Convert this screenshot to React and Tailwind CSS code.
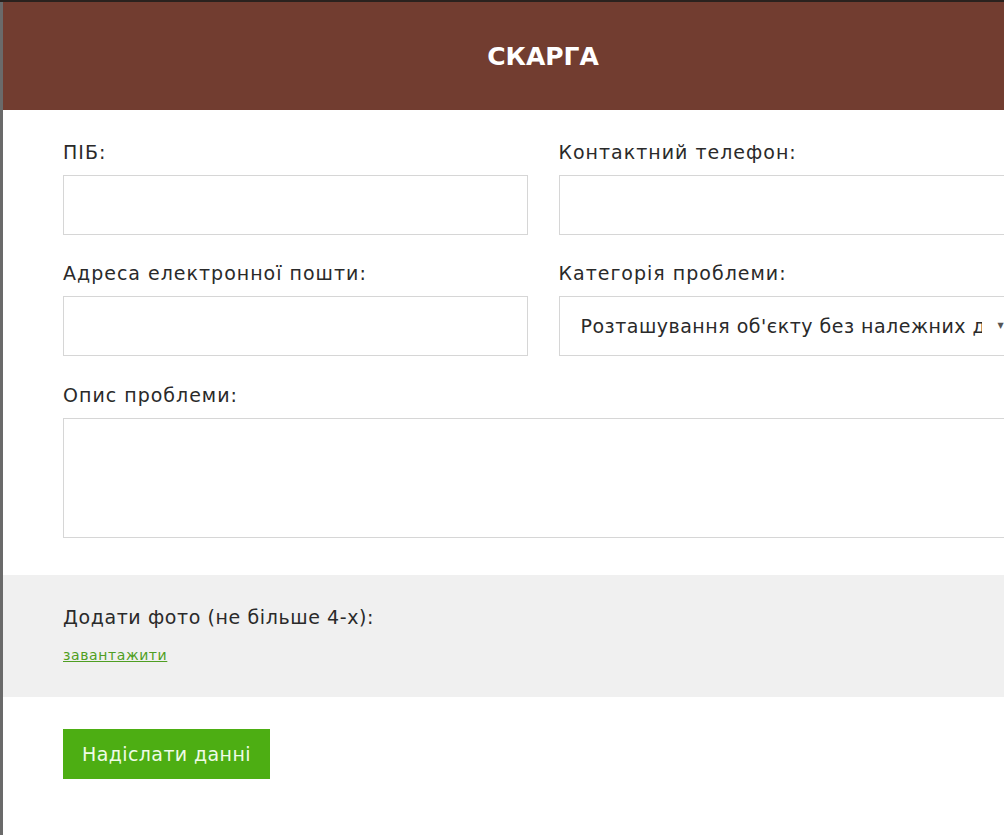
import React from 'react';

const font = { fontFamily: '"DejaVu Sans", "Open Sans", sans-serif' };

function Field({ label, children, className = '' }) {
  return (
    <div className={`flex flex-col ${className}`}>
      <label className="h-[30px] text-[19px] leading-[30px] tracking-[1px] text-[#2a2a2a]">{label}</label>
      <div className="mt-[8px]">{children}</div>
    </div>
  );
}

export default function App() {
  return (
    <div className="h-[835px] w-[1004px] overflow-hidden bg-[#6a6a6a] border-t-2 border-[#2a221e] pl-[3px]" style={font}>
      <div className="w-[1080px] bg-white h-full">
        {/* Header */}
        <div className="h-[108px] bg-[#723d30] flex items-center justify-center pt-[2px]">
          <h1 className="text-white text-[25px] font-semibold">СКАРГА</h1>
        </div>

        {/* Form */}
        <div className="px-[60px] pt-[27px]">
          <div className="grid grid-cols-2 gap-x-[31px] gap-y-[23px]">
            <Field label="ПІБ:">
              <div className="h-[60px] border border-[#d6d6d6]" />
            </Field>
            <Field label="Контактний телефон:">
              <div className="h-[60px] border border-[#d6d6d6]" />
            </Field>
            <Field label="Адреса електронної пошти:">
              <div className="h-[60px] border border-[#d6d6d6]" />
            </Field>
            <Field label="Категорія проблеми:">
              <div className="h-[60px] border border-[#d6d6d6] flex items-center pl-[21px]">
                <span className="w-[401px] shrink-0 overflow-hidden whitespace-nowrap text-[19px] tracking-[0.5px] text-[#2a2a2a]">
                  Розташування об'єкту без належних дозволів
                </span>
                <span className="ml-[16px] text-[8px] text-[#555]">▼</span>
              </div>
            </Field>
          </div>
          <Field label="Опис проблеми:" className="mt-[24px]">
            <div className="h-[120px] border border-[#d6d6d6]" />
          </Field>
        </div>

        {/* Photos */}
        <div className="mt-[37px] h-[122px] bg-[#f0f0f0] px-[60px] pt-[28px]">
          <p className="text-[19px] tracking-[0.6px] text-[#2a2a2a] leading-[28px]">Додати фото (не більше 4-х):</p>
          <a href="#" className="block mt-[15px] text-[14px] tracking-[0.6px] text-[#4f9e22] underline leading-[18px]">
            завантажити
          </a>
        </div>

        {/* Submit */}
        <div className="px-[60px] pt-[32px]">
          <button className="h-[50px] px-[19px] bg-[#4dae13] text-[#effbe6] text-[19px] tracking-[0.4px]">
            Надіслати данні
          </button>
        </div>
      </div>
    </div>
  );
}
